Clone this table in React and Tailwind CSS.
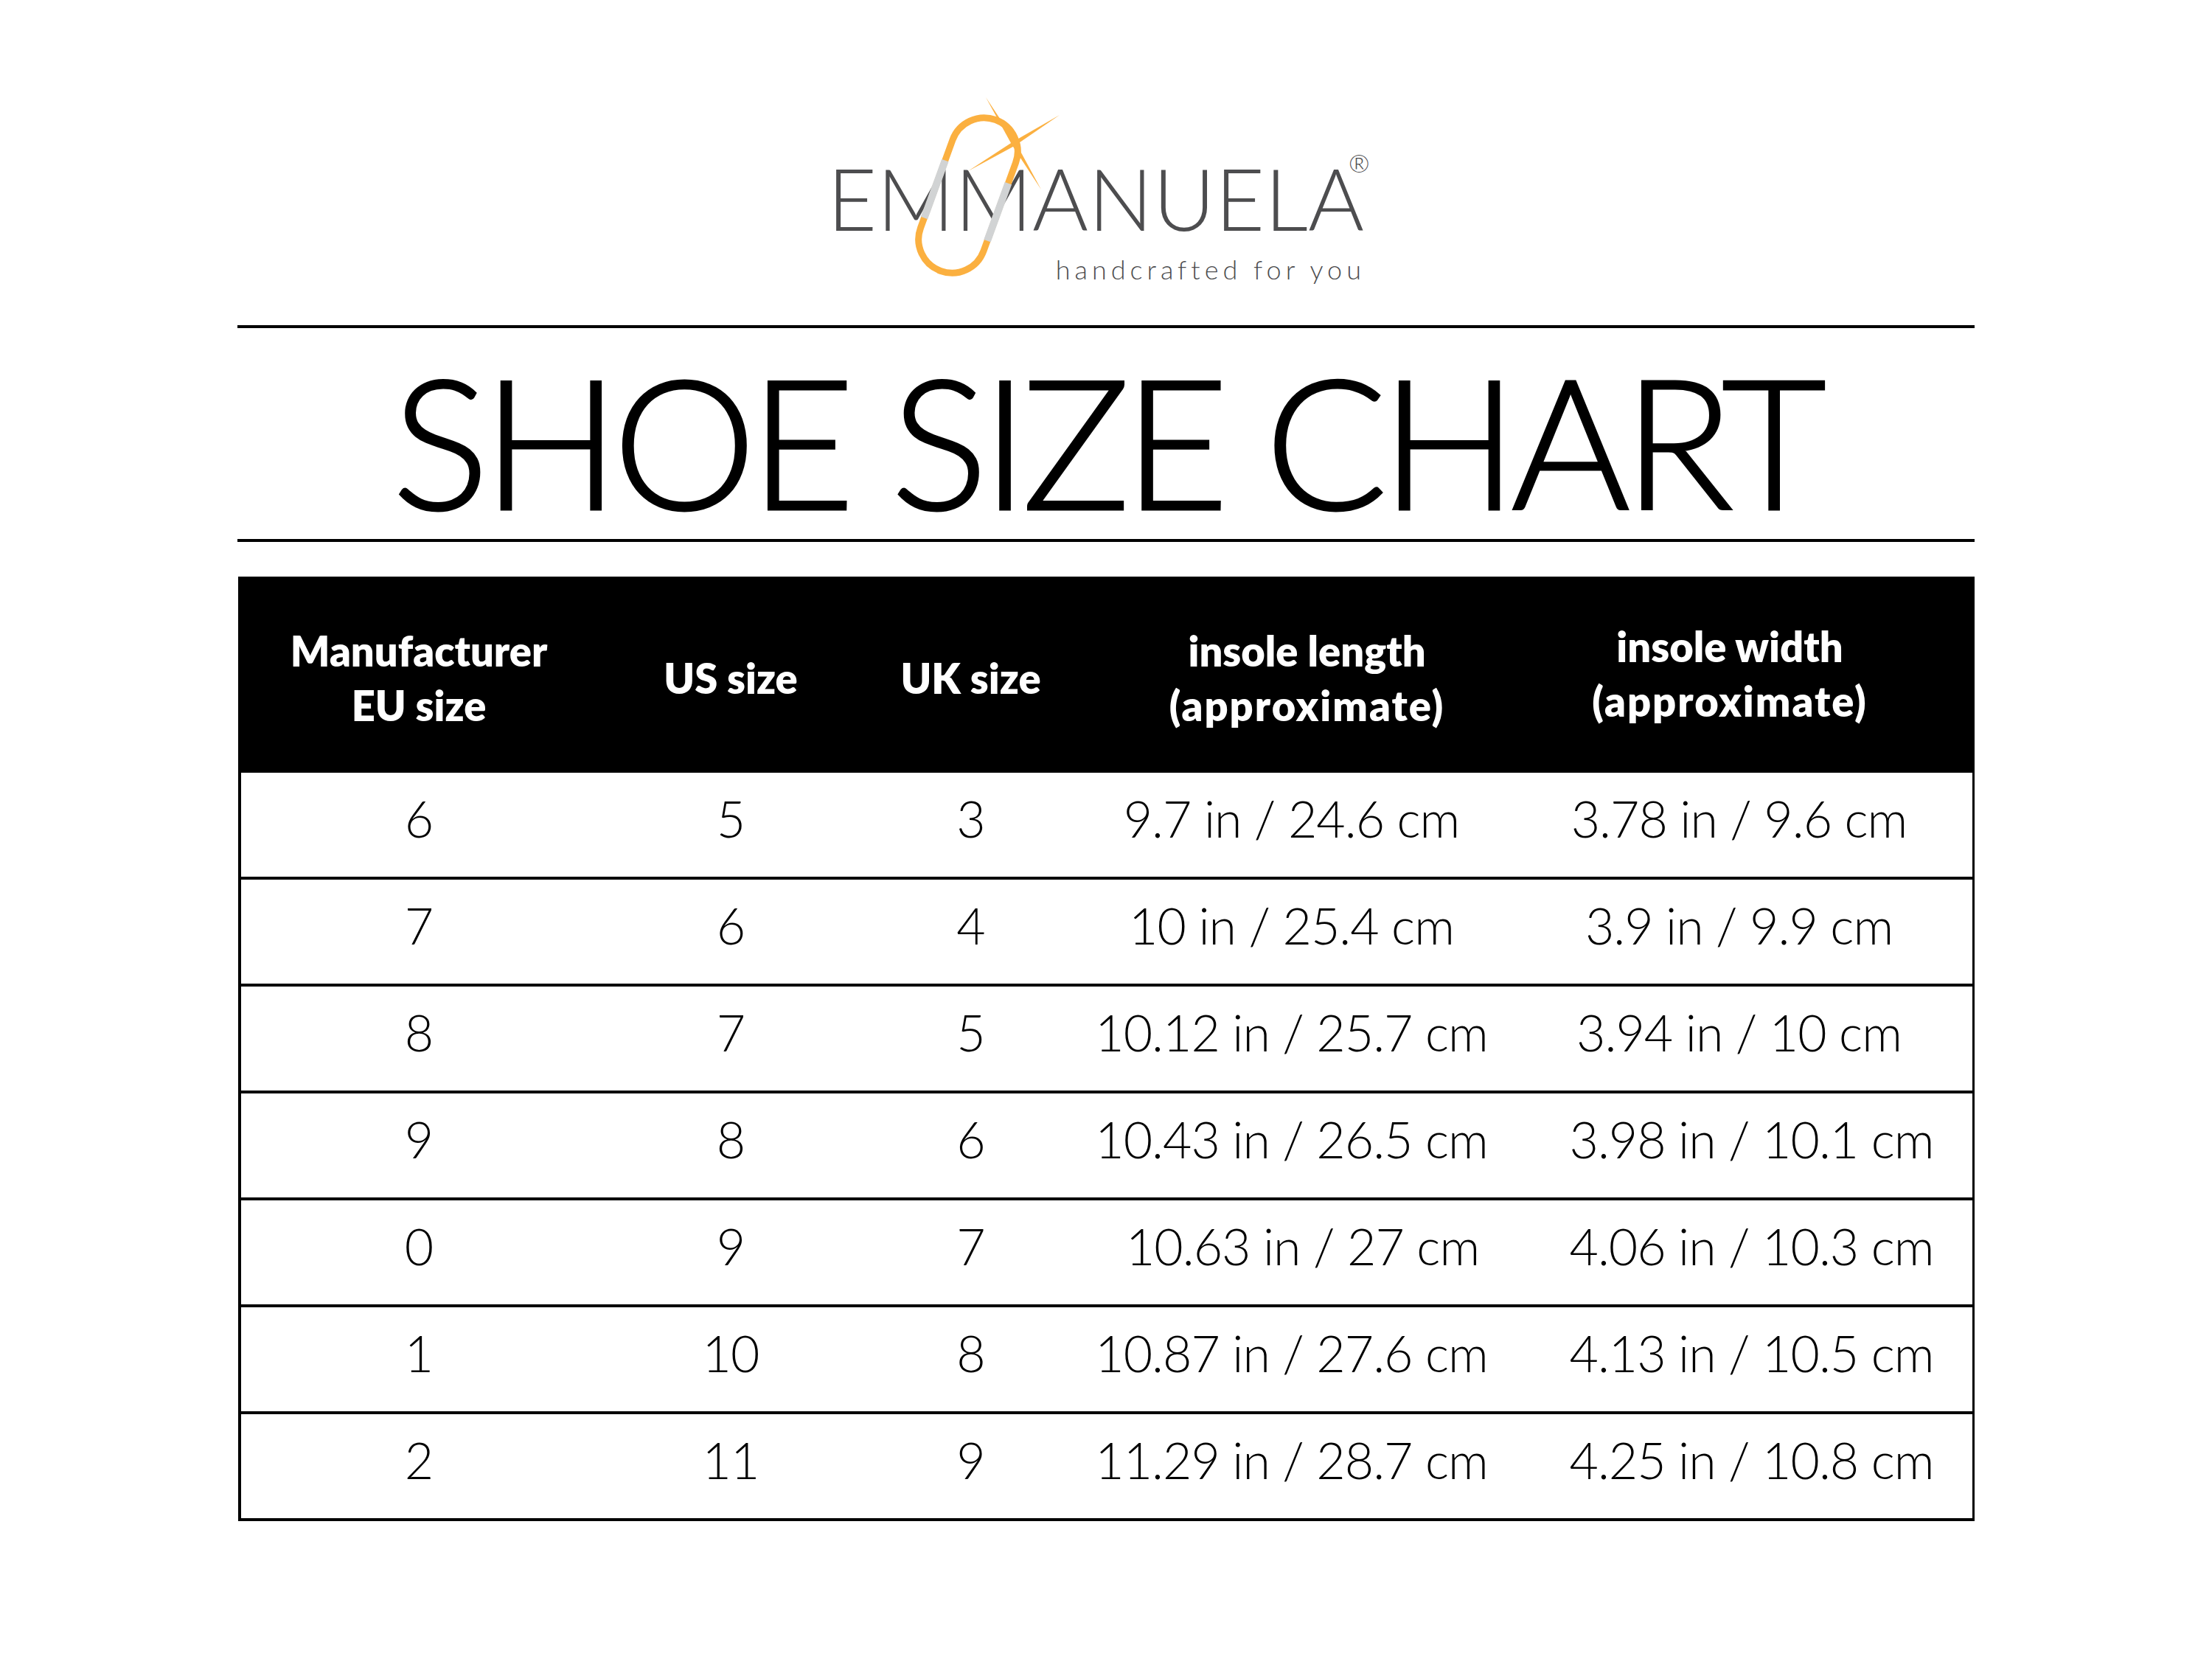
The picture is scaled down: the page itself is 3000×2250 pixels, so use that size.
import React from "react";

const rows = [
  ["6", "5", "3", "9.7 in / 24.6 cm", "3.78 in / 9.6 cm"],
  ["7", "6", "4", "10 in / 25.4 cm", "3.9 in / 9.9 cm"],
  ["8", "7", "5", "10.12 in / 25.7 cm", "3.94 in / 10 cm"],
  ["9", "8", "6", "10.43 in / 26.5 cm", "3.98 in / 10.1 cm"],
  ["0", "9", "7", "10.63 in / 27 cm", "4.06 in / 10.3 cm"],
  ["1", "10", "8", "10.87 in / 27.6 cm", "4.13 in / 10.5 cm"],
  ["2", "11", "9", "11.29 in / 28.7 cm", "4.25 in / 10.8 cm"],
];

const cols = "grid grid-cols-[483px_363px_288px_582px_632px]";

const Logo = () => (
  <div className="relative mx-auto h-[341px] w-[800px]">
    <div className="flex flex-col items-end pr-[54px] pt-[111px] text-[#4d4d4f] [font-family:Lato,'Liberation_Sans',sans-serif]">
      <span className="text-[116px] font-light leading-none tracking-[0px] mr-[-4px]">
        EMMANUELA
      </span>
      <span className="mt-[20px] text-[36px] font-light leading-none tracking-[6px] mr-[-6px]">
        handcrafted for you
      </span>
    </div>
    <span className="absolute left-[729px] top-[104px] text-[34px] font-light leading-none text-[#4d4d4f] [font-family:Lato,sans-serif]">
      ®
    </span>
    {/* oval + sparkle */}
    <svg
      className="absolute inset-0"
      width="800"
      height="341"
      viewBox="1100 100 800 341"
      fill="none"
    >
      <defs>
        <clipPath id="band">
          <rect x="1100" y="231" width="800" height="83" />
        </clipPath>
      </defs>
      <rect
        x="1267.5"
        y="156"
        width="91"
        height="218"
        rx="45.5"
        transform="rotate(20 1313 265)"
        stroke="#fbb040"
        strokeWidth="9"
      />
      <rect
        x="1267.5"
        y="156"
        width="91"
        height="218"
        rx="45.5"
        transform="rotate(20 1313 265)"
        stroke="#d1d3d4"
        strokeWidth="10"
        clipPath="url(#band)"
      />
      <polygon points="1337,132 1377.6,193.5 1412,257 1372.4,196.5" fill="#fbb040" />
      <polygon points="1437,156 1376.6,197.6 1313,232 1373.4,192.4" fill="#fbb040" />
    </svg>
  </div>
);

export default function App() {
  return (
    <div className="h-[2250px] w-[3000px] bg-white pt-[100px] [font-family:Lato,'Liberation_Sans',sans-serif]">
      <Logo />

      <div className="mx-auto h-[4px] w-[2356px] bg-black" />
      <h1 className="mt-[28px] text-center text-[246px] font-light leading-none tracking-[-9px] text-black [-webkit-text-stroke:3px_black]">
        SHOE SIZE CHART
      </h1>
      <div className="mx-auto mt-[12px] h-[4px] w-[2356px] bg-black" />

      <div className="mx-auto mt-[47px] w-[2355px] border-l-[4px] border-r-[3px] border-black">
        <div className={`${cols} h-[266px] bg-black pt-[10px] text-[56px] font-extrabold leading-[74px] text-white`}>
          <div className="flex items-center justify-center text-center">
            Manufacturer<br />EU size
          </div>
          <div className="flex items-center justify-center">US size</div>
          <div className="flex items-center justify-center">UK size</div>
          <div className="flex flex-col items-center justify-center pl-[42px] text-center">
            <span>insole length</span>
            <span className="tracking-[2px]">(approximate)</span>
          </div>
          <div className="flex flex-col items-center justify-center pb-[12px] pr-[25px] text-center">
            <span>insole width</span>
            <span className="tracking-[2px]">(approximate)</span>
          </div>
        </div>

        {rows.map((r, i) => (
          <div
            key={i}
            className={`${cols} h-[145px] border-b-[4px] border-black pb-[18px] text-[68px] font-light leading-none tracking-[-1px] text-black`}
          >
            <div className="flex items-center justify-center">{r[0]}</div>
            <div className="flex items-center justify-center">{r[1]}</div>
            <div className="flex items-center justify-center">{r[2]}</div>
            <div className={`flex items-center justify-center ${i === 4 ? "pl-[30px]" : ""}`}>
              {r[3]}
            </div>
            <div className={`flex items-center justify-center ${i >= 3 ? "pl-[34px]" : ""}`}>
              {r[4]}
            </div>
          </div>
        ))}
      </div>
    </div>
  );
}
